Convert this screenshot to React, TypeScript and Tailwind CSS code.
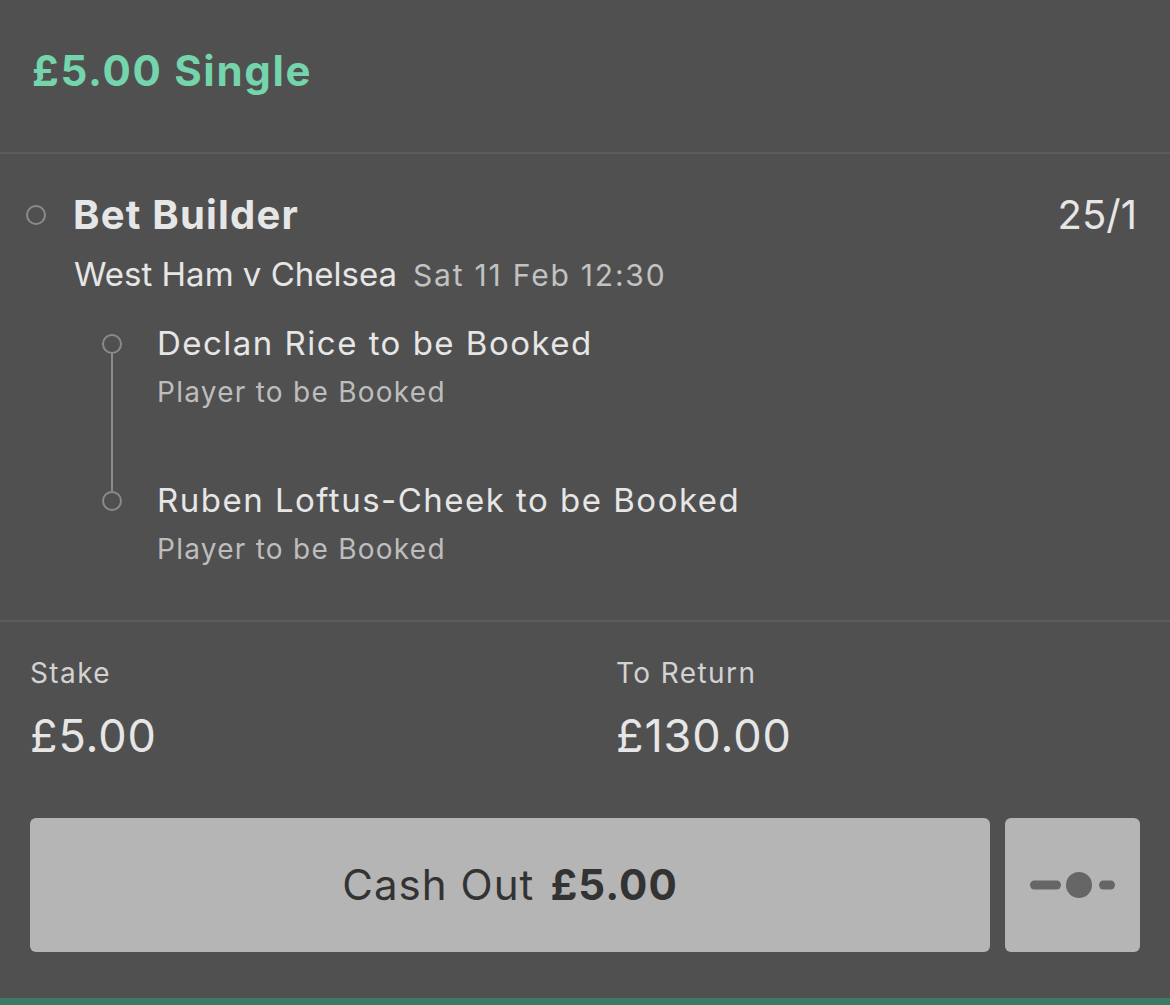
import React from "react";

interface Leg {
  selection: string;
  market: string;
}

const legs: Leg[] = [
  { selection: "Declan Rice to be Booked", market: "Player to be Booked" },
  { selection: "Ruben Loftus-Cheek to be Booked", market: "Player to be Booked" },
];

const Ring = () => (
  <div className="w-5 h-5 shrink-0 rounded-full border-[2.5px] border-[#8b8b8b]" />
);

const SliderIcon = () => (
  <svg width="86" height="30" viewBox="0 0 86 30" fill="#666666">
    <rect x="0" y="10.5" width="31" height="9" rx="4.5" />
    <circle cx="49" cy="15" r="13" />
    <rect x="69" y="10.5" width="16" height="9" rx="4.5" />
  </svg>
);

const App = () => {
  return (
    <div
      className="w-[1170px] h-[1005px] bg-[#505050] text-[#e6e6e6] flex flex-col overflow-hidden"
      style={{ fontFamily: "Inter, 'Liberation Sans', sans-serif" }}
    >
      {/* Header */}
      <div className="h-[154px] shrink-0 border-b-2 border-[#5c5c5c] pl-[32px] pt-[50px]">
        <h1 className="text-[42px] leading-none font-bold tracking-[0.04em] text-[#74d4ac]">
          £5.00 Single
        </h1>
      </div>

      {/* Bet details */}
      <div className="shrink-0 border-b-2 border-[#5c5c5c] pl-[26px] pr-[33px] pt-[41px] pb-[57px]">
        <div className="flex items-center">
          <Ring />
          <div className="ml-[27px] text-[40px] leading-none font-bold tracking-[0.03em] flex-1">
            Bet Builder
          </div>
          <div className="text-[40px] leading-none">25/1</div>
        </div>

        <div className="ml-[48px] mt-[23px] flex items-baseline">
          <span className="text-[33px] leading-none">West Ham v Chelsea</span>
          <span className="ml-[16px] text-[30px] leading-none tracking-[0.06em] text-[#c2c2c2]">
            Sat 11 Feb 12:30
          </span>
        </div>

        {/* Legs with timeline */}
        <div className="ml-[76px] mt-[36px] flex flex-col">
          {legs.map((leg, i) => {
            const first = i === 0;
            const last = i === legs.length - 1;
            return (
              <div key={i} className="flex">
                <div className="w-5 shrink-0 flex flex-col items-center">
                  <div
                    className={
                      first ? "h-[7px] w-[2px]" : "h-[7px] w-[2px] bg-[#8b8b8b]"
                    }
                  />
                  <Ring />
                  <div
                    className={
                      last ? "flex-1 w-[2px]" : "flex-1 w-[2px] bg-[#8b8b8b]"
                    }
                  />
                </div>
                <div className={last ? "ml-[35px]" : "ml-[35px] pb-[78px]"}>
                  <div className="text-[33px] leading-none tracking-[0.045em]">
                    {leg.selection}
                  </div>
                  <div className="mt-[18px] text-[28px] leading-none tracking-[0.045em] text-[#bdbdbd]">
                    {leg.market}
                  </div>
                </div>
              </div>
            );
          })}
        </div>
      </div>

      {/* Stake / return */}
      <div className="px-[30px] pt-[37px] flex-1 flex flex-col">
        <div className="flex">
          <div className="w-[586px]">
            <div className="text-[28px] leading-none tracking-[0.05em] text-[#d2d2d2]">
              Stake
            </div>
            <div className="mt-[26px] text-[45px] leading-none tracking-[0.02em]">£5.00</div>
          </div>
          <div>
            <div className="text-[28px] leading-none tracking-[0.05em] text-[#d2d2d2]">
              To Return
            </div>
            <div className="mt-[26px] text-[45px] leading-none tracking-[0.02em]">£130.00</div>
          </div>
        </div>

        <div className="mt-[60px] flex gap-[15px]">
          <button className="w-[960px] h-[134px] rounded-[6px] bg-[#b5b5b5] text-[#333333] text-[42px] leading-none tracking-[0.025em] flex items-center justify-center">
            Cash Out
            <span className="ml-[16px] font-bold">£5.00</span>
          </button>
          <button className="w-[135px] h-[134px] rounded-[6px] bg-[#b5b5b5] flex items-center justify-center">
            <SliderIcon />
          </button>
        </div>
      </div>

      {/* Bottom accent */}
      <div className="h-[7px] shrink-0 bg-[#3d7a65]" />
    </div>
  );
};

export default App;
